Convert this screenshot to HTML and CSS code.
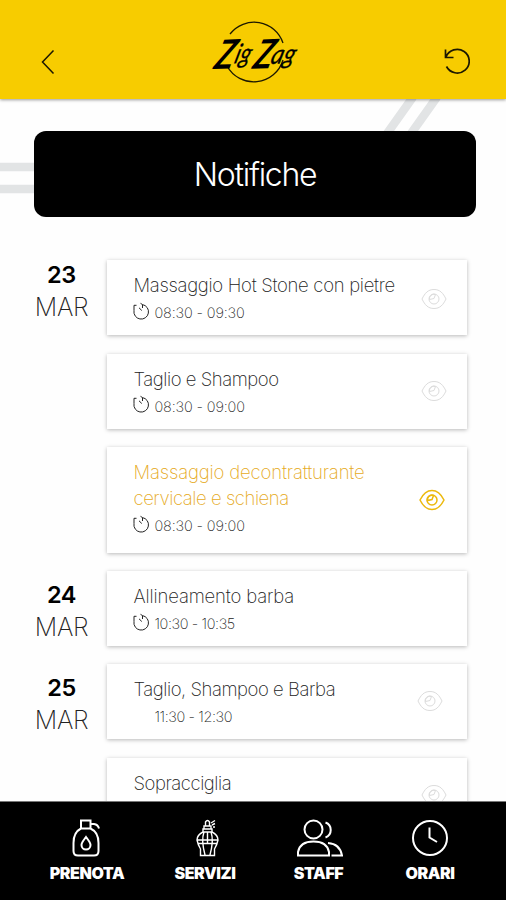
FILE: index.html
```html
<!DOCTYPE html>
<html lang="it">
<head>
<meta charset="utf-8">
<title>Zig Zag - Notifiche</title>
<link rel="stylesheet" href="styles.css">
</head>
<body>
<svg class="defs">
	<symbol id="eye" viewBox="0 0 26 22">
		<path d="M1 11 C4 5 7 1.500 13 1.500 S22 5 25 11 C22 17 19 20.500 13 20.500 S4 17 1 11Z"/>
		<circle cx="13" cy="11" r="5"/>
		<path class="fill" d="M8.500 11.500 A4.500 4.500 0 0 1 14.500 6.500 L13 10.500Z"/>
	</symbol>
	<symbol id="timer" viewBox="0 0 18 18">
		<path d="M4.500 3.300 H2 V8.500 A7.300 7.300 0 1 0 10.500 2.600 V6 M10.500 2.600 L8.500 1.300 M7 5.800 L9.800 8.500"/>
	</symbol>
</svg>

<header class="header">
	<svg class="back" viewBox="0 0 14 26"><path d="M12.5 1.5 L1.5 13 L12.5 24.5"/></svg>
	<svg class="logo" viewBox="0 0 120 80">
		<path class="ring" d="M28 16 A30.500 30.500 0 0 1 81 25 M25 48 A30.500 30.500 0 0 0 81 42"/>
		<g transform="translate(11 50) rotate(-2) skewX(-18)">
			<text class="big" x="0" y="1" textLength="19" lengthAdjust="spacingAndGlyphs">Z</text>
			<text class="small" x="19" y="-4" textLength="16" lengthAdjust="spacingAndGlyphs">ig</text>
			<text class="big" x="39" y="2" textLength="19" lengthAdjust="spacingAndGlyphs">Z</text>
			<text class="small" x="56" y="-2" textLength="24" lengthAdjust="spacingAndGlyphs">ag</text>
		</g>
	</svg>
	<svg class="reload" viewBox="0 0 26 27"><path d="M1.5 1.5 V9.5 H9.5 M2 9 A12 11.8 0 1 1 2.5 18.5"/></svg>
</header>

<main class="content">
	<svg class="stripes" viewBox="0 0 506 120">
		<path d="M0 68 H40 M0 90 H40 M413 -2 L386 36 M437 -2 L410 36"/>
	</svg>
	<h1 class="banner"><span>Notifiche</span></h1>

	<section class="day">
		<div class="date"><b>23</b><span>MAR</span></div>
		<div class="cards">
			<article class="card">
				<div class="info">
					<h2>Massaggio Hot Stone con pietre</h2>
					<p><svg class="timer"><use href="#timer"/></svg><span>08:30 - 09:30</span></p>
				</div>
				<svg class="eye"><use href="#eye"/></svg>
			</article>
			<article class="card">
				<div class="info">
					<h2 class="tight">Taglio e Shampoo</h2>
					<p><svg class="timer"><use href="#timer"/></svg><span>08:30 - 09:00</span></p>
				</div>
				<svg class="eye raised"><use href="#eye"/></svg>
			</article>
			<article class="card active">
				<div class="info">
					<h2><span class="loose">Massaggio decontratturante</span><br><span class="tight">cervicale e schiena</span></h2>
					<p><svg class="timer"><use href="#timer"/></svg><span>08:30 - 09:00</span></p>
				</div>
				<svg class="eye"><use href="#eye"/></svg>
			</article>
		</div>
	</section>

	<section class="day later">
		<div class="date"><b>24</b><span>MAR</span></div>
		<div class="cards">
			<article class="card">
				<div class="info">
					<h2 class="loose">Allineamento barba</h2>
					<p><svg class="timer"><use href="#timer"/></svg><span class="narrow">10:30 - 10:35</span></p>
				</div>
			</article>
		</div>
	</section>

	<section class="day later">
		<div class="date"><b>25</b><span>MAR</span></div>
		<div class="cards">
			<article class="card">
				<div class="info">
					<h2 class="tight">Taglio, Shampoo e Barba</h2>
					<p><span class="notimer narrow">11:30 - 12:30</span></p>
				</div>
				<svg class="eye raised shifted"><use href="#eye"/></svg>
			</article>
			<article class="card">
				<div class="info">
					<h2 class="tight">Sopracciglia</h2>
				</div>
				<svg class="eye raised"><use href="#eye"/></svg>
			</article>
		</div>
	</section>
</main>

<nav class="tabs">
	<a class="tab">
		<svg viewBox="0 0 40 40">
			<path d="M14 2.5 H23.5 V10.5 H14Z M23.5 6 H27 Q31 6.500 32 10.500 M14 10.500 C9 13 6.500 18 6.500 25 V33 Q6.500 37.500 11 37.500 H27 Q31.500 37.500 31.500 33 V25 C31.500 18 29 13 23.500 10.500 M19 19 C16.500 22.500 14.500 24.500 14.500 27 A4.500 4.500 0 0 0 23.500 27 C23.500 24.500 21.500 22.500 19 19Z"/>
		</svg>
		<span>PRENOTA</span>
	</a>
	<a class="tab">
		<svg class="thin" viewBox="0 0 40 40">
			<path d="M20.500 8 V4 Q22.500 1 24.500 4 V8 M19 8 H26 V11 H19Z M26 5 L30 2.500 M27 7 L30 5.500 M28 9 H30 M18 11 H27 V14 H18Z M18 14 Q12 17 12 22 Q13 27 15.500 31 V37.500 H29.500 V31 Q32 27 33 22 Q33 17 27 14 M12 22 H33 M13 25.500 H32 M19 14 Q16 22 20 37 M26 14 Q29 22 25 37 M22.500 14 V25"/>
		</svg>
		<span>SERVIZI</span>
	</a>
	<a class="tab">
		<svg class="wide" viewBox="0 0 48 40">
			<circle cx="18.500" cy="11.500" r="9"/>
			<path d="M3 37.500 V34 Q5 23.500 18.500 23.500 Q32 23.500 34 34 V37.500Z M30.500 4.500 A8 8 0 0 1 30.500 19.500 M33 25 Q45 26 47 37.500 H36.500"/>
		</svg>
		<span>STAFF</span>
	</a>
	<a class="tab">
		<svg viewBox="0 0 40 40">
			<circle cx="20" cy="20" r="17"/>
			<path d="M19.500 9.500 V19.500 L27 24"/>
		</svg>
		<span>ORARI</span>
	</a>
</nav>
</body>
</html>
```
FILE: styles.css
```css
* {
	box-sizing: border-box;
}

body {
	margin: 0;
	height: 900px;
	overflow: hidden;
	display: flex;
	flex-direction: column;
	background-color: #fefefe;
	color: #222;
	font-family: Inter, "Liberation Sans", sans-serif;
}

svg {
	fill: none;
	stroke: currentColor;
	flex-shrink: 0;
}

h1, h2, p {
	margin: 0;
	font-weight: 300;
}

.defs {
	position: absolute;
	width: 0;
	height: 0;
}

/* header */
.header {
	position: relative;
	z-index: 1;
	height: 99px;
	flex-shrink: 0;
	padding: 18px 36px 0 41px;
	display: flex;
	justify-content: space-between;
	background-color: #f7cc00;
	box-shadow: 0 1px 3px rgba(0, 0, 0, .4);
	color: #1c1800;
}

.back {
	width: 14px;
	height: 26px;
	margin-top: 31px;
	stroke-width: 1.5;
}

.logo {
	width: 120px;
	height: 80px;
	margin-left: 147px;
	margin-right: auto;
}

.logo .ring {
	stroke-width: 1.3;
}

.logo text {
	fill: #000;
	font-family: Lato, sans-serif;
	font-style: italic;
}

.logo .big {
	font-size: 40px;
	font-weight: 700;
	stroke: none;
}

.logo .small {
	font-size: 27px;
	font-weight: 400;
	stroke-width: .3;
}

.reload {
	width: 26px;
	height: 27px;
	margin-top: 30px;
	stroke-width: 1.7;
}

/* list */
.content {
	position: relative;
	flex: 1;
	min-height: 0;
	overflow: hidden;
	padding: 32px 30px 0 34px;
}

.stripes {
	position: absolute;
	left: 0;
	top: 0;
	width: 506px;
	height: 120px;
	color: #e2e4e5;
	stroke-width: 8.5;
}

.banner {
	position: relative;
	height: 86px;
	margin-bottom: 43px;
	display: flex;
	align-items: center;
	justify-content: center;
	background-color: #000;
	color: #fff;
	border-radius: 12px;
	font-size: 32px;
	letter-spacing: -1.3px;
}

.day {
	display: flex;
	gap: 18px;
	margin-bottom: 18px;
}

.date {
	width: 55px;
	display: flex;
	flex-direction: column;
	align-items: center;
	margin-top: -1px;
	font-size: 25px;
	font-weight: 200;
	line-height: 32px;
	letter-spacing: -.4px;
}

.date b {
	font-size: 23.500px;
	font-weight: 600;
	color: #000;
}

.later .date {
	padding-top: 9px;
}

.cards {
	width: 360px;
	display: flex;
	flex-direction: column;
	gap: 18.500px;
}

.card {
	height: 75px;
	padding: 12px 20px 0 26.500px;
	display: flex;
	justify-content: space-between;
	background-color: #fff;
	box-shadow: 0 1px 4px rgba(0, 0, 0, .28);
}

.card h2 {
	font-size: 18.500px;
	font-weight: 200;
	line-height: 26px;
	letter-spacing: -.3px;
	white-space: nowrap;
}

.card .tight {
	letter-spacing: -.45px;
}

.card .loose {
	letter-spacing: -.15px;
}

.card p {
	display: flex;
	align-items: center;
	gap: 5px;
	height: 29px;
	margin-left: -2px;
	font-size: 14.500px;
	font-weight: 200;
	letter-spacing: -.15px;
	color: #222;
}

.timer {
	width: 18px;
	height: 18px;
	margin-top: -4px;
}

.notimer {
	margin-left: 23px;
}

.card .narrow {
	letter-spacing: -.4px;
}

.eye {
	width: 26px;
	height: 22px;
	margin-top: 16px;
	color: #dcdcdc;
}

.eye .fill {
	fill: currentColor;
}

.eye.raised {
	margin-top: 14px;
}

.eye.shifted {
	margin-right: 4px;
}

.card.active {
	height: 106px;
}

.active h2 {
	color: #e6aa1c;
}

.active .eye {
	margin-top: 30px;
	margin-right: 2px;
	color: #ecb90c;
	stroke-width: 1.5;
}

/* bottom bar */
.tabs {
	height: 99px;
	flex-shrink: 0;
	padding: 16px 0 0 28px;
	display: grid;
	grid-template-columns: 118px 118px 109px 114px;
	background-color: #000;
	border-top: 1px solid #777;
	color: #fff;
}

.tab {
	display: flex;
	flex-direction: column;
	align-items: center;
	gap: 5px;
	font-size: 16px;
	font-weight: 900;
	line-height: 20px;
	letter-spacing: -.4px;
}

.tab svg {
	width: 40px;
	height: 40px;
	stroke-width: 2;
}

.tab svg.thin {
	stroke-width: 1.4;
}

.tab svg.wide {
	width: 48px;
}
```
